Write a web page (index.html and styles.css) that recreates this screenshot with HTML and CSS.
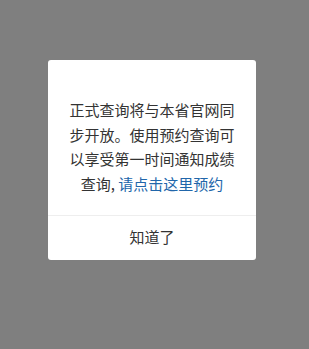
FILE: index.html
```html
<!DOCTYPE html>
<html>
<head>
<meta charset="utf-8">
<link rel="stylesheet" href="styles.css">
</head>
<body>
<div class="overlay">
  <div class="dialog">
    <div class="content">正式查询将与本省官网同步开放。使用预约查询可以享受第一时间通知成绩查询, <span class="link">请点击这里预约</span></div>
    <div class="footer">知道了</div>
  </div>
</div>
</body>
</html>
```
FILE: styles.css
```css
html, body {
  margin: 0;
  padding: 0;
}
body {
  width: 309px;
  height: 349px;
  background: #7f7f7f;
  font-family: "Noto Sans CJK SC", "Noto Sans", sans-serif;
}
.overlay {
  width: 309px;
  height: 349px;
  display: flex;
  justify-content: flex-start;
  align-items: flex-start;
  padding: 60px 0 0 48px;
  box-sizing: border-box;
}
.dialog {
  width: 208px;
  height: 200px;
  background: #fff;
  border-radius: 3px;
  display: flex;
  flex-direction: column;
}
.content {
  flex: 1;
  padding: 38px 18px 0;
  font-size: 15px;
  line-height: 24.5px;
  color: #333;
  text-align: center;
}
.link {
  color: #2166aa;
}
.footer {
  height: 40px;
  padding-bottom: 4px;
  border-top: 1px solid #eeeeee;
  display: flex;
  align-items: center;
  justify-content: center;
  font-size: 15px;
  color: #333;
}
```
